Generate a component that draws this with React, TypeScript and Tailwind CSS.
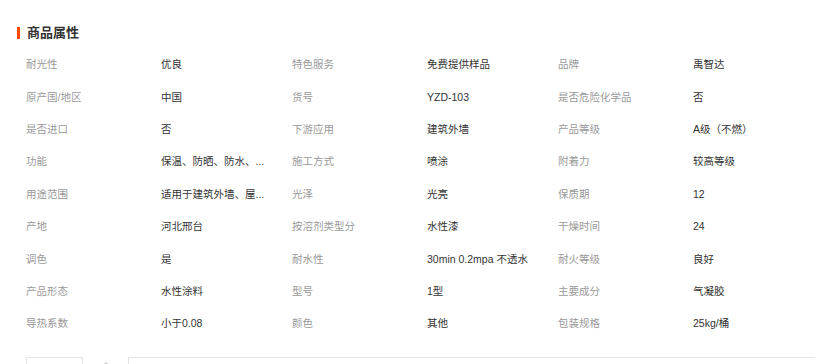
import { ChevronUp } from 'lucide-react';

type Attr = [string, string];

// values are written as the page shows them (long ones already cut with "...")
const rows: Attr[][] = [
  [['耐光性', '优良'], ['特色服务', '免费提供样品'], ['品牌', '禹智达']],
  [['原产国/地区', '中国'], ['货号', 'YZD-103'], ['是否危险化学品', '否']],
  [['是否进口', '否'], ['下游应用', '建筑外墙'], ['产品等级', 'A级（不燃）']],
  [['功能', '保温、防晒、防水、...'], ['施工方式', '喷涂'], ['附着力', '较高等级']],
  [['用途范围', '适用于建筑外墙、屋...'], ['光泽', '光亮'], ['保质期', '12']],
  [['产地', '河北邢台'], ['按溶剂类型分', '水性漆'], ['干燥时间', '24']],
  [['调色', '是'], ['耐水性', '30min 0.2mpa 不透水'], ['耐火等级', '良好']],
  [['产品形态', '水性涂料'], ['型号', '1型'], ['主要成分', '气凝胶']],
  [['导热系数', '小于0.08'], ['颜色', '其他'], ['包装规格', '25kg/桶']],
];

function AttrCell({ label, value }: { label: string; value: string }) {
  return (
    <div className="flex shrink-0 items-center w-[266px]">
      <span className="w-[135px] shrink-0 text-[#999]">{label}</span>
      <span className="whitespace-nowrap text-[#333]">{value}</span>
    </div>
  );
}

export default function App() {
  return (
    <div
      className="w-[815px] h-[364px] overflow-hidden bg-white text-[10.5px]"
      style={{ fontFamily: '"Liberation Sans", "Noto Sans CJK SC", sans-serif' }}
    >
      <div className="flex items-center pt-[23px] pl-[17px]">
        <span className="w-[3px] h-[12px] bg-[#ff4a00]" />
        <h3 className="ml-[7px] text-[13px] leading-[20px] font-bold text-[#333]">商品属性</h3>
      </div>

      <div className="mt-[6px] pl-[26px]">
        {rows.map((row, i) => (
          <div key={i} className="flex h-[32.4px] items-center">
            {row.map(([label, value]) => (
              <AttrCell key={label} label={label} value={value} />
            ))}
          </div>
        ))}
      </div>

      <div className="mt-[16px] flex items-start pl-[26px]">
        <div className="w-[57px] h-[20px] border-t border-x border-[#e5e5e5]" />
        <div className="w-[45px] flex justify-center pt-[1px]">
          <ChevronUp size={12} strokeWidth={1.5} className="text-[#999]" />
        </div>
        <div className="flex-1 h-[20px] border-t border-l border-[#e5e5e5]" />
      </div>
    </div>
  );
}
